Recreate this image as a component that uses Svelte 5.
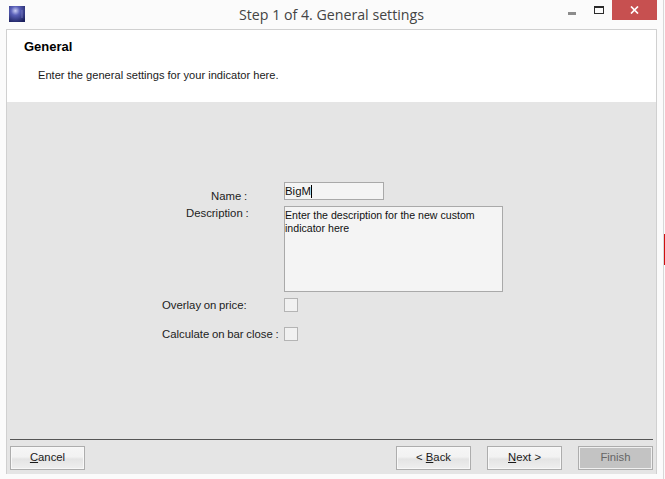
<script>
  const rows = [
    { label: 'Overlay on price:' },
    { label: 'Calculate on bar close :' }
  ];
</script>

<div class="window">
  <header class="titlebar">
    <svg class="appicon" width="16" height="16" viewBox="0 0 16 16" aria-hidden="true">
      <defs>
        <radialGradient id="orb" cx="0.4" cy="0.3" r="0.8">
          <stop offset="0" stop-color="#c9cdf5" />
          <stop offset="0.35" stop-color="#5a60b8" />
          <stop offset="1" stop-color="#1a1f5c" />
        </radialGradient>
      </defs>
      <rect width="16" height="16" fill="url(#orb)" />
      <path d="M13 4v8" stroke="#8a8fd0" stroke-width="0.6" />
    </svg>
    <div class="title">Step 1 of 4. General settings</div>
    <div class="controls">
      <svg class="min" width="8" height="3" viewBox="0 0 8 3" aria-hidden="true"><rect width="8" height="3" fill="#8c8c8c" /></svg>
      <svg class="max" width="10" height="8" viewBox="0 0 10 8" aria-hidden="true"><rect x="0.5" y="0.5" width="9" height="7" fill="none" stroke="#2b2b2b" /><rect x="0" y="0" width="10" height="2" fill="#2b2b2b" /></svg>
      <div class="close">
        <svg width="9" height="8" viewBox="0 0 9 8" aria-hidden="true"><path d="M1 0.5 8 7.5M8 0.5 1 7.5" stroke="#fff" stroke-width="1.7" fill="none" /></svg>
      </div>
    </div>
  </header>

  <main class="frame">
    <section class="head">
      <h1>General</h1>
      <p>Enter the general settings for your indicator here.</p>
    </section>

    <section class="body">
      <div class="form">
        <div class="row name">
          <span class="label">Name :</span>
          <div class="field short">BigM<span class="caret"></span></div>
        </div>
        <div class="row desc">
          <span class="label">Description :</span>
          <div class="field area">Enter the description for the new custom indicator here</div>
        </div>
        {#each rows as r}
          <div class="row check">
            <span class="label">{r.label}</span>
            <div class="box"></div>
          </div>
        {/each}
      </div>

      <div class="footer">
        <div class="rule"></div>
        <div class="buttons">
          <button><u>C</u>ancel</button>
          <div class="right">
            <button>&lt; <u>B</u>ack</button>
            <button><u>N</u>ext &gt;</button>
            <button class="disabled">Finish</button>
          </div>
        </div>
      </div>
    </section>
  </main>
  <div class="stripe"></div>
</div>

<style>
  :global(body) { margin: 0; background: #fbfbfb; }
  .window {
    position: relative;
    width: 665px;
    height: 479px;
    box-sizing: border-box;
    padding: 0 8px 5px 6px;
    background: #fbfbfb;
    display: flex;
    flex-direction: column;
    overflow: hidden;
    font-family: "Liberation Sans", Arial, sans-serif;
    font-size: 11.1px;
    color: #1a1a1a;
  }
  .window::after {
    content: "";
    position: absolute;
    top: 0;
    bottom: 0;
    right: 1px;
    width: 1px;
    background: #d8d8d8;
  }
  .titlebar {
    height: 29px;
    flex: none;
    display: flex;
    position: relative;
    justify-content: center;
  }
  .appicon { position: absolute; left: 3px; top: 6px; }
  .title {
    font-family: "Open Sans", "Noto Sans", sans-serif;
    font-size: 14.2px;
    line-height: 20px;
    padding-top: 5px;
    color: #444;
  }
  .controls {
    position: absolute;
    right: 0;
    top: 0;
    display: flex;
    align-items: flex-start;
  }
  .min { margin: 12px 18px 0 0; }
  .max { margin: 6px 8px 0 0; }
  .close {
    width: 45px;
    height: 20px;
    background: #c75050;
    display: flex;
    align-items: center;
    justify-content: center;
  }
  .frame {
    flex: 1;
    display: flex;
    flex-direction: column;
    border: 1px solid #d0d0d0;
    border-bottom: 0;
    min-height: 0;
  }
  .head {
    height: 72px;
    flex: none;
    background: #fff;
    box-sizing: border-box;
    padding: 10px 0 0 17px;
  }
  h1 {
    margin: 0;
    font-size: 13px;
    line-height: 14px;
    font-weight: bold;
    color: #000;
  }
  .head p {
    margin: 14px 0 0 14px;
    line-height: 14px;
  }
  .body {
    flex: 1;
    background: #e5e5e5;
    display: flex;
    flex-direction: column;
    justify-content: space-between;
    min-height: 0;
  }
  .form {
    padding-top: 80px;
    display: flex;
    flex-direction: column;
  }
  .row {
    display: grid;
    grid-template-columns: 277px auto;
    justify-content: start;
  }
  .label {
    font-size: 11.35px;
    word-spacing: -0.5px;
    line-height: 14px;
    color: #222;
    white-space: nowrap;
  }
  .row.name { height: 24px; }
  .name .label { padding: 7px 0 0 204px; }
  .row.desc { height: 92px; }
  .desc .label { padding: 0 0 0 179px; }
  .row.check { height: 29px; }
  .check .label { padding: 0 0 0 155px; }
  .field {
    background: #f4f4f4;
    border: 1px solid #a9a9a9;
    box-sizing: border-box;
    font-size: 10.6px;
    line-height: 13px;
    color: #111;
    padding-left: 0;
  }
  .short {
    width: 100px;
    height: 18px;
    padding-top: 2px;
    display: flex;
    align-items: flex-start;
    font-size: 11.4px;
  }
  .caret {
    width: 1px;
    height: 13px;
    background: #000;
  }
  .area {
    width: 219px;
    height: 86px;
    padding-top: 2px;
  }
  .box {
    width: 14px;
    height: 14px;
    box-sizing: border-box;
    background: #f1f1f1;
    border: 1px solid #b4b4b4;
  }
  .footer {
    padding: 0 3px 4px 3px;
  }
  .rule {
    height: 1px;
    background: #555;
    margin-bottom: 6px;
  }
  .buttons {
    display: flex;
    justify-content: space-between;
  }
  .right {
    display: flex;
    gap: 16px;
  }
  button {
    width: 75px;
    height: 24px;
    box-sizing: border-box;
    padding: 0 0 2px;
    font: inherit;
    font-size: 11.3px;
    color: #1a1a1a;
    border: 1px solid #adadad;
    background: linear-gradient(#f6f6f6 0%, #f2f2f2 45%, #e4e4e4 55%, #efefef 100%);
    box-shadow: inset 0 0 0 1px #f8f8f8;
  }
  button.disabled {
    background: #c3c3c3;
    color: #666;
    box-shadow: inset 0 0 0 1px #f0f0f0;
  }
  .stripe {
    position: absolute;
    right: 0;
    top: 234px;
    width: 1px;
    height: 31px;
    background: #d01010;
  }
</style>
